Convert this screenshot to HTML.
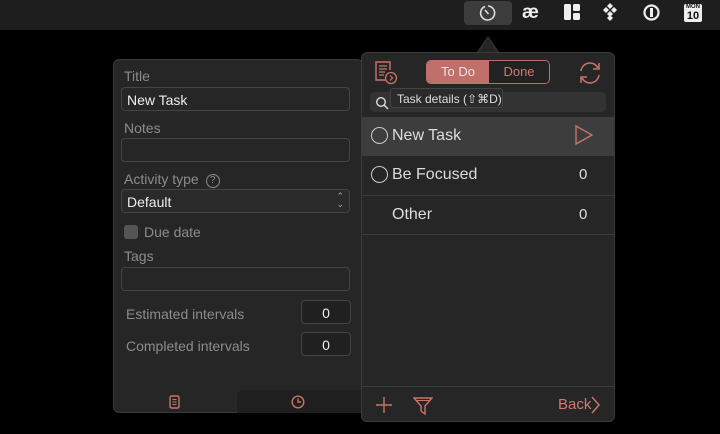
<!DOCTYPE html>
<html><head><style>
*{box-sizing:border-box;margin:0;padding:0}
body{width:720px;height:434px;background:#000;font-family:"Liberation Sans",sans-serif;position:relative;overflow:hidden;color:#ddd}
.abs{position:absolute}
.lbl{position:absolute;color:#8c8c8c;font-size:14px}
.fld{position:absolute;border:1px solid #444;border-radius:4px;background:#262626}
.acc{color:#d07a6e}
</style></head><body>
<div class="abs" style="left:0;top:0;width:720px;height:30px;background:#1e1e1e"></div>
<div class="abs" style="left:464px;top:1px;width:48px;height:24px;background:#3c3c3c;border-radius:4px"></div>
<svg class="abs" style="left:477px;top:2px" width="22" height="22" viewBox="0 0 22 22"><path d="M8 4.5A7 7 0 1 0 11 4" fill="none" stroke="#ddd" stroke-width="1.6"/><path d="M8 8l3.5 4" stroke="#ddd" stroke-width="1.6"/></svg>
<div class="abs" style="left:522px;top:2px;font-size:19px;color:#eee;font-weight:bold">æ</div>
<svg class="abs" style="left:564px;top:4px" width="16" height="16"><rect x="0" y="0" width="7" height="16" rx="1.5" fill="#eee"/><rect x="9" y="0" width="7" height="7" rx="1.5" fill="#eee"/><rect x="9" y="9" width="7" height="7" rx="1.5" fill="#eee"/></svg>
<svg class="abs" style="left:603px;top:3px" width="14" height="18"><g fill="#eee"><path d="M7 0l3 3-3 3-3-3z"/><path d="M3 4l3 3-3 3-3-3z"/><path d="M11 4l3 3-3 3-3-3z"/><path d="M7 8l3 3-3 3-3-3z"/><path d="M7 12l3 3-3 3-3-3z"/></g></svg>
<svg class="abs" style="left:643px;top:4px" width="17" height="17"><circle cx="8.5" cy="8.5" r="7" fill="none" stroke="#eee" stroke-width="2.2"/><rect x="7" y="4" width="3" height="9" fill="#eee"/></svg>
<div class="abs" style="left:684px;top:4px;width:18px;height:18px;background:#eee;border-radius:2px;color:#111;font-size:6px;font-weight:bold;text-align:center;line-height:7px">MON<div style="font-size:11px;line-height:11px">10</div></div>

<div class="abs" style="left:113px;top:59px;width:250px;height:354px;background:#262626;border:1px solid #3a3a3a;border-radius:6px"></div>
<div class="lbl" style="left:124px;top:68px">Title</div>
<div class="fld" style="left:121px;top:87px;width:229px;height:24px;color:#eee;font-size:14px;padding:4px 5px">New Task</div>
<div class="lbl" style="left:124px;top:120px">Notes</div>
<div class="fld" style="left:121px;top:138px;width:229px;height:24px"></div>
<div class="lbl" style="left:124px;top:171px">Activity type <span style="display:inline-block;width:14px;height:14px;border:1.3px solid #8c8c8c;border-radius:50%;font-size:10px;text-align:center;line-height:12px;vertical-align:1px;margin-left:3px">?</span></div>
<div class="fld" style="left:121px;top:189px;width:229px;height:24px;color:#eee;font-size:14px;padding:4px 5px;background:#2a2a2a">Default<span style="position:absolute;right:5px;top:2px;font-size:9px;line-height:8px;color:#aaa">⌃<br>⌄</span></div>
<div class="abs" style="left:124px;top:225px;width:14px;height:14px;background:#555;border-radius:3px"></div>
<div class="lbl" style="left:144px;top:224px">Due date</div>
<div class="lbl" style="left:124px;top:248px">Tags</div>
<div class="fld" style="left:121px;top:267px;width:229px;height:24px"></div>
<div class="lbl" style="left:126px;top:306px">Estimated intervals</div>
<div class="fld" style="left:301px;top:300px;width:50px;height:24px;color:#eee;font-size:14px;text-align:center;padding-top:4px;background:#202020">0</div>
<div class="lbl" style="left:126px;top:338px">Completed intervals</div>
<div class="fld" style="left:301px;top:332px;width:50px;height:24px;color:#eee;font-size:14px;text-align:center;padding-top:4px;background:#202020">0</div>
<div class="abs" style="left:237px;top:390px;width:125px;height:23px;background:#1f1f1f;border-radius:6px 0 0 0"></div>
<svg class="abs" style="left:169px;top:395px" width="11" height="14"><rect x="1" y="1" width="9" height="12" rx="1.5" fill="none" stroke="#c87468" stroke-width="1.4"/><path d="M3.5 4.5h4M3.5 7h4M3.5 9.5h4" stroke="#c87468"/></svg>
<svg class="abs" style="left:291px;top:395px" width="14" height="14"><circle cx="7" cy="7" r="5.8" fill="none" stroke="#c87468" stroke-width="1.4"/><path d="M7 3.5V7h3" fill="none" stroke="#c87468" stroke-width="1.4"/></svg>

<svg class="abs" style="left:477px;top:36px" width="22" height="18"><path d="M0 17L11 1 22 17" fill="#262626" stroke="#3a3a3a"/></svg>
<div class="abs" style="left:361px;top:52px;width:254px;height:370px;background:#262626;border:1px solid #3a3a3a;border-radius:6px;overflow:hidden">
  <div class="abs" style="left:0;top:64px;width:254px;height:39px;background:#3d3d3d"></div>
  <div class="abs" style="left:0;top:142px;width:254px;height:1px;background:#3a3a3a"></div>
  <div class="abs" style="left:0;top:181px;width:254px;height:1px;background:#3a3a3a"></div>
  <div class="abs" style="left:0;top:333px;width:254px;height:1px;background:#3a3a3a"></div>
</div>
<svg class="abs" style="left:373px;top:60px" width="26" height="26"><path d="M13 20H3V2h14v8" fill="none" stroke="#c87468" stroke-width="1.4"/><path d="M6 6h8M6 9h8M6 12h6M6 15h5" stroke="#c87468" stroke-width="1.2"/><circle cx="18" cy="18" r="5.5" fill="#262626" stroke="#c87468" stroke-width="1.3"/><path d="M17 15.5l2.5 2.5-2.5 2.5" fill="none" stroke="#c87468" stroke-width="1.2"/></svg>
<div class="abs" style="left:426px;top:60px;width:124px;height:24px;border:1px solid #c0706a;border-radius:5px;overflow:hidden;font-size:13px">
  <div class="abs" style="left:0;top:0;width:62px;height:22px;background:#c0706a;color:#f0e0dc;text-align:center;line-height:22px">To Do</div>
  <div class="abs" style="left:62px;top:0;width:60px;height:22px;background:#222;color:#d07a6e;text-align:center;line-height:22px">Done</div>
</div>
<svg class="abs" style="left:576px;top:59px" width="28" height="28"><path d="M5 12A9 9 0 0 1 22 9" fill="none" stroke="#c87468" stroke-width="1.5"/><path d="M23 4v6h-6" fill="none" stroke="#c87468" stroke-width="1.5"/><path d="M23 16A9 9 0 0 1 6 19" fill="none" stroke="#c87468" stroke-width="1.5"/><path d="M5 24v-6h6" fill="none" stroke="#c87468" stroke-width="1.5"/></svg>
<div class="abs" style="left:370px;top:92px;width:236px;height:20px;background:#333;border-radius:5px"></div>
<svg class="abs" style="left:375px;top:96px" width="14" height="14"><circle cx="6" cy="6" r="4.3" fill="none" stroke="#ddd" stroke-width="1.4"/><path d="M9 9l4 4" stroke="#ddd" stroke-width="1.5"/></svg>
<div class="abs" style="left:390px;top:88px;width:113px;height:20px;background:#2a2a2a;border:1px solid #444;border-radius:3px;font-size:12px;color:#ddd;padding:3px 0 0 6px;white-space:nowrap">Task details (⇧⌘D)</div>
<div class="abs" style="left:371px;top:127px;width:17px;height:17px;border:1.5px solid #ccc;border-radius:50%"></div>
<div class="abs" style="left:392px;top:127px;font-size:16px;color:#ddd">New Task</div>
<svg class="abs" style="left:574px;top:124px" width="20" height="22"><path d="M2 2L18 11 2 20z" fill="none" stroke="#c87468" stroke-width="1.4"/></svg>
<div class="abs" style="left:371px;top:166px;width:17px;height:17px;border:1.5px solid #ccc;border-radius:50%"></div>
<div class="abs" style="left:392px;top:166px;font-size:16px;color:#ddd">Be Focused</div>
<div class="abs" style="left:579px;top:166px;font-size:15px;color:#ddd">0</div>
<div class="abs" style="left:392px;top:206px;font-size:16px;color:#ddd">Other</div>
<div class="abs" style="left:579px;top:206px;font-size:15px;color:#ddd">0</div>
<svg class="abs" style="left:375px;top:396px" width="18" height="18"><path d="M9 1v16M1 9h16" stroke="#c87468" stroke-width="1.4"/></svg>
<svg class="abs" style="left:413px;top:396px" width="20" height="20"><path d="M1 2h18l-7 8v8l-4-3v-5z" fill="none" stroke="#c87468" stroke-width="1.4"/><path d="M4 4.5h12" stroke="#c87468"/></svg>
<div class="abs acc" style="left:558px;top:396px;font-size:15px">Back</div>
<svg class="abs" style="left:591px;top:396px" width="10" height="18"><path d="M1 1l7 8-7 8" fill="none" stroke="#c87468" stroke-width="1.5"/></svg>
</body></html>
